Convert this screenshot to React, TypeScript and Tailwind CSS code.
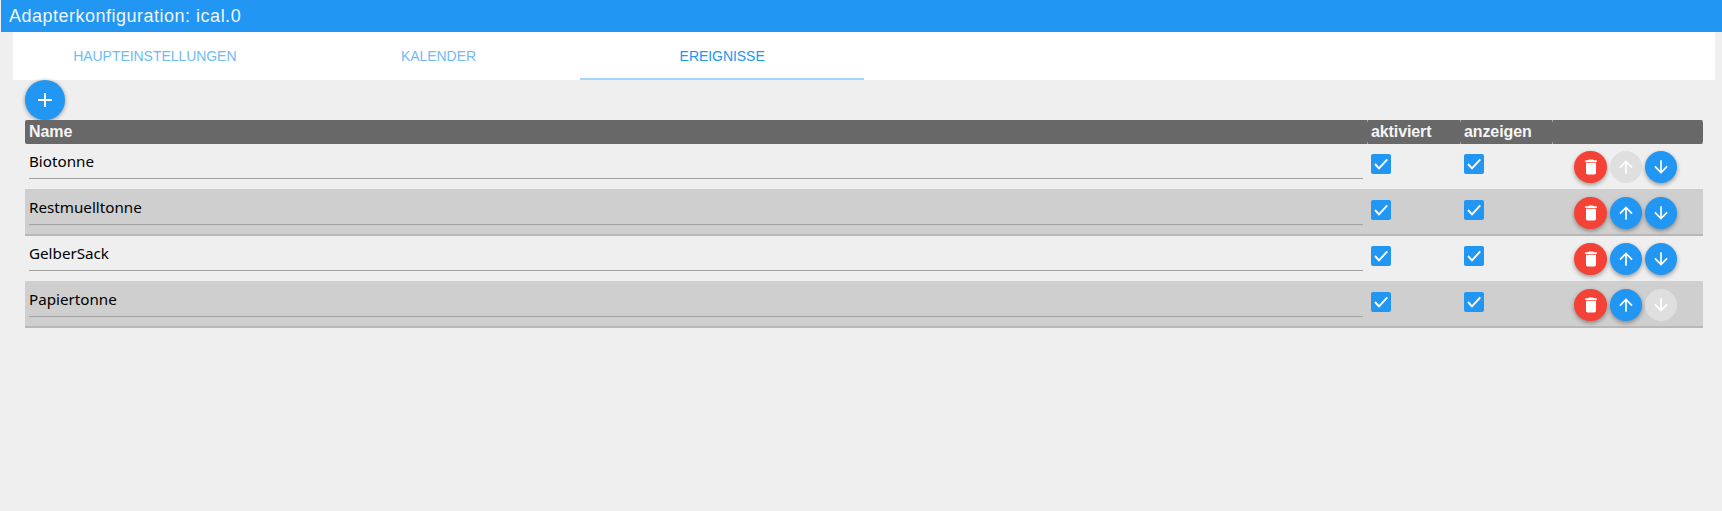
const rows = [
  { name: "Biotonne", up: false, down: true, alt: false },
  { name: "Restmuelltonne", up: true, down: true, alt: true },
  { name: "GelberSack", up: true, down: true, alt: false },
  { name: "Papiertonne", up: true, down: false, alt: true },
];

function Check() {
  return (
    <div className="flex h-5 w-5 items-center justify-center rounded-[2px] bg-[#2196f3]">
      <svg viewBox="0 0 20 20" className="h-5 w-5" fill="none" stroke="#fff" strokeWidth="1.9">
        <path d="M4 10l4 4.3 8.3-9" />
      </svg>
    </div>
  );
}

function Round({ enabled, color, wide, children }: { enabled: boolean; color: string; wide?: boolean; children: React.ReactNode }) {
  return (
    <button
      className={
        "flex h-8 items-center justify-center rounded-full " +
        (wide ? "w-[33px] " : "w-8 ") +
        (enabled ? color + " shadow-[0_2px_4px_rgba(0,0,0,0.35)]" : "bg-[#dfdfdf]")
      }
    >
      {children}
    </button>
  );
}

function Arrow({ dir }: { dir: "up" | "down" }) {
  return (
    <svg viewBox="0 0 24 24" className={"h-5 w-5 " + (dir === "down" ? "rotate-180" : "")} fill="#fff">
      <path d="M4 12l1.41 1.41L11 7.83V20h2V7.83l5.58 5.59L20 12l-8-8-8 8z" />
    </svg>
  );
}

function Trash() {
  return (
    <svg viewBox="0 0 24 24" className="h-5 w-5" fill="#fff">
      <path d="M6 19c0 1.1.9 2 2 2h8c1.1 0 2-.9 2-2V7H6v12zM19 4h-3.5l-1-1h-5l-1 1H5v2h14V4z" />
    </svg>
  );
}

function Divider() {
  return (
    <div className="flex h-full w-px flex-col justify-between">
      <div className="h-[2px] bg-[#a8a8a8]" />
      <div className="h-[2px] bg-[#a8a8a8]" />
    </div>
  );
}

export default function App() {
  return (
    <div className="h-[511px] w-[1722px] overflow-hidden bg-[#efefef] pl-px font-['Liberation_Sans',sans-serif]">
      <div className="flex h-8 items-center bg-[#2196f3] pl-2 text-[18px] tracking-[0.5px] text-[#eef7fe]">
        Adapterkonfiguration: ical.0
      </div>
      <div className="ml-3 mr-[7px] flex h-12 bg-white text-[14px] tracking-[-0.05px]">
        <div className="flex w-1/6 items-center justify-center border-y-2 border-transparent text-[#70baf7]">HAUPTEINSTELLUNGEN</div>
        <div className="flex w-1/6 items-center justify-center border-y-2 border-transparent text-[#70baf7]">KALENDER</div>
        <div className="flex w-1/6 items-center justify-center border-y-2 border-t-transparent border-b-[#a6d5fa] text-[#2196f3]">EREIGNISSE</div>
      </div>
      <div className="ml-6 w-[1678px]">
        <button className="flex h-10 w-10 items-center justify-center rounded-full bg-[#2196f3] shadow-[0_1px_4px_rgba(0,0,0,0.4)]">
          <svg viewBox="0 0 24 24" className="h-6 w-6" fill="#fff">
            <path d="M19 13h-6v6h-2v-6H5v-2h6V5h2v6h6v2z" />
          </svg>
        </button>
        <div className="flex h-6 items-center rounded-[2px] bg-[#686868] text-[16px] leading-6 font-bold tracking-[-0.1px] text-[#f5f5f5]">
          <div className="w-[1342px] pl-1">Name</div>
          <Divider />
          <div className="w-[92px] pl-[3px]">aktiviert</div>
          <Divider />
          <div className="w-[91px] pl-[3px]">anzeigen</div>
          <Divider />
          <div className="flex-1" />
          <Divider />
        </div>
        {rows.map((r) => (
          <div
            key={r.name}
            className={"flex " + (r.alt ? "h-[47px] border-b-2 border-[#b8b8b8] bg-[#cfcfcf] pt-px" : "h-[45px]")}
          >
            <div className="w-[1342px] pl-1 pr-1">
              <div className="h-[35px] border-b border-[#a3a3a3] pt-[7px] font-['Noto_Sans',sans-serif] text-[15.2px] leading-[20px] text-black">
                {r.name}
              </div>
            </div>
            <div className="w-[93px] pl-1 pt-[10px]"><Check /></div>
            <div className="w-[92px] pl-1 pt-[10px]"><Check /></div>
            <div className="flex flex-1 gap-[3px] pl-[22px] pt-[7px]">
              <Round enabled wide color="bg-[#f44336]"><Trash /></Round>
              <Round enabled={r.up} color="bg-[#2196f3]"><Arrow dir="up" /></Round>
              <Round enabled={r.down} color="bg-[#2196f3]"><Arrow dir="down" /></Round>
            </div>
          </div>
        ))}
      </div>
    </div>
  );
}
